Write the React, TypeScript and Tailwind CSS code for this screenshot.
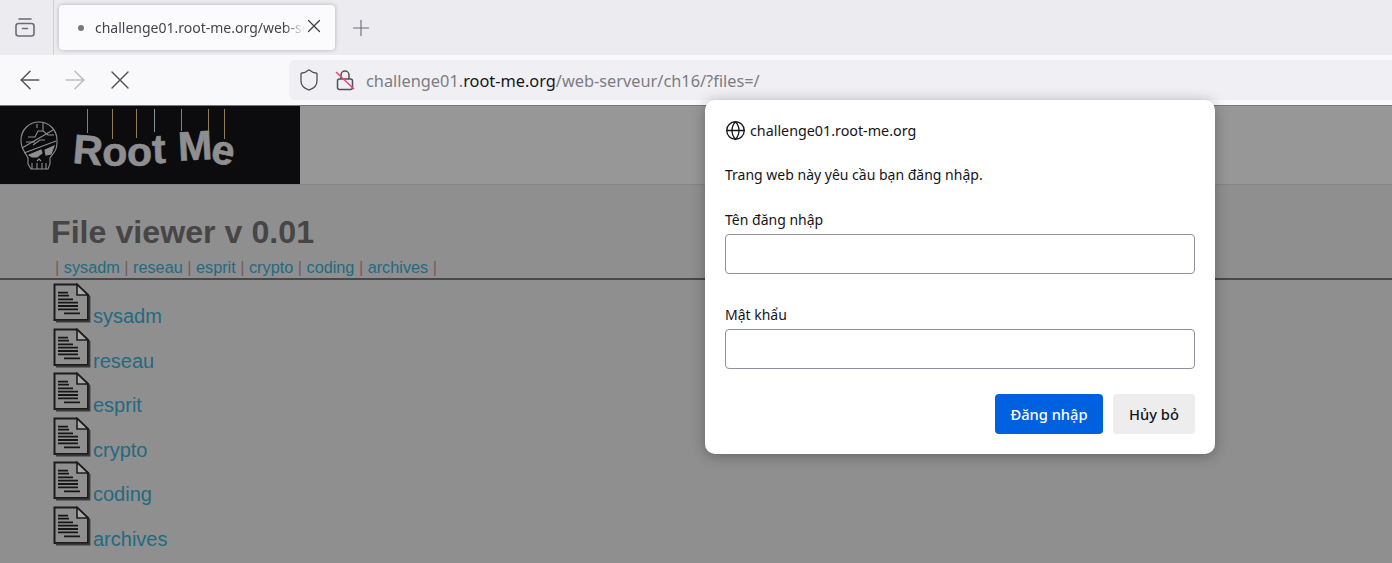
import React from 'react';
import { ArrowLeft, ArrowRight, X, Plus, Shield, Globe } from 'lucide-react';

const ui = "font-['Noto_Sans',sans-serif]";
const files = ['sysadm', 'reseau', 'esprit', 'crypto', 'coding', 'archives'];

const FileIcon = () => (
  <svg width="38" height="40" viewBox="0 0 38 40" className="shrink-0 block">
    <path d="M1.500 1.500H24L35 12V37H1.500Z" fill="#8f8f90" stroke="#1c1c1d" strokeWidth="2" />
    <path d="M24 1.500V12H35Z" fill="#a9a9aa" stroke="#1c1c1d" strokeWidth="1.600" />
    <path d="M3 38.500H36.500V13" fill="none" stroke="#3a3a3b" strokeWidth="1.800" />
    <path
      d="M5 9.700h10M5 12.700h11M5 16.300h15M5 19.700h20M5 23h20M5 26.300h20M11 30.300h16"
      stroke="#161617"
      strokeWidth="1.800"
    />
  </svg>
);

const Skull = () => (
  <svg width="38" height="49" viewBox="0 0 38 49" fill="none" stroke="#8f8f91" strokeWidth="1.100" className="shrink-0">
    <path d="M19 1C9 1 1 9 1 19c0 5 1 8 3 11l4 7v6l3 5h17l2-5v-6l5-7c2-3 2-6 2-11C37 9 29 1 19 1Z" />
    <path d="M2 27L33 9M4 32L36 20" />
    <path d="M8 16h7l3-6h5M6 21h9M13 24l7-5h5M23 2v8l5 4h6M17 3v4" />
    <path d="M9 34l12-5 1 3-5 4h-5ZM25 29l9-4-3 8-5 1Z" fill="#8f8f91" />
    <path d="M12 42v6M17 42v6M22 42v6M26 42v6M17 40l2-2 2 2" />
  </svg>
);

const strings = [
  { x: 87, h: 24, c: '#5c8ba3' },
  { x: 112, h: 30, c: '#8f7d55' },
  { x: 136, h: 29, c: '#8f7d55' },
  { x: 154, h: 23, c: '#84929a' },
  { x: 181, h: 22, c: '#5c8ba3' },
  { x: 208, h: 24, c: '#8f7d55' },
  { x: 224, h: 30, c: '#8f7d55' },
];

const Logo = () => (
  <div className="relative w-[300px] h-[78px] bg-[#0c0c0f] flex items-center pl-[20px] overflow-hidden">
    {strings.map((s) => (
      <span
        key={s.x}
        className="absolute top-[3px] w-px"
        style={{ left: s.x, height: s.h, backgroundColor: s.c }}
      />
    ))}
    <Skull />
    <div className="ml-[15px] mt-[8px] flex font-['Liberation_Sans',sans-serif] font-bold text-[41px] tracking-[-0.4px] leading-none text-[#8f8f91] [-webkit-text-stroke:0.7px_#8f8f91]">
      <span className="inline-block rotate-[5deg] translate-y-[1px]">R</span>
      <span className="inline-block translate-y-[3px]">o</span>
      <span className="inline-block translate-y-[3px]">o</span>
      <span className="inline-block -rotate-2">t</span>
      <span className="w-[13px]" />
      <span className="inline-block -rotate-3 translate-y-[-3px]">M</span>
      <span className="inline-block rotate-[12deg] translate-y-[1px]">e</span>
    </div>
  </div>
);

const Chrome = () => (
  <div className={ui}>
    <div className="h-[55px] bg-[#ebebf0] flex items-center">
      <div className="w-[54px] h-full border-r border-[#cfcfd4] flex items-center pl-[15px]">
        <svg width="20" height="19" viewBox="0 0 20 19" fill="none" stroke="#6b6b72" strokeWidth="1.600" strokeLinecap="round">
          <rect x="1" y="5.500" width="18" height="12.500" rx="2.500" />
          <path d="M4 1h12M7.500 10.500h5" />
        </svg>
      </div>
      <div className="ml-[5px] w-[276px] h-[45px] bg-[#fbfbfd] rounded-[4px] shadow-[0_0_4px_rgba(0,0,0,0.25)] flex items-center pl-[19px] relative">
        <span className="w-[6px] h-[6px] rounded-full bg-[#77777d]" />
        <span className="ml-[11px] w-[210px] overflow-hidden whitespace-nowrap text-[14px] text-[#45454b] [mask-image:linear-gradient(to_right,black_90%,transparent)]">
          challenge01.root-me.org/web-serveur/ch16/
        </span>
        <X size={22} strokeWidth={1.300} className="absolute right-[10px] top-[10px] text-[#3f3f45]" />
      </div>
      <Plus size={26} strokeWidth={1.050} className="ml-[13px] text-[#6e6e74]" />
    </div>
    <div className="h-[50px] bg-[#f9f9fb] flex items-center">
      <ArrowLeft size={30} strokeWidth={1.250} className="ml-[15px] text-[#55555b]" />
      <ArrowRight size={30} strokeWidth={1.250} className="ml-[15px] text-[#bdbdc1]" />
      <X size={32} strokeWidth={1.100} className="ml-[14px] text-[#55555b]" />
      <div className="ml-[153px] flex-1 h-[40px] bg-[#f0f0f4] rounded-l-[6px] flex items-center pl-[8px]">
        <Shield size={24} strokeWidth={1.300} className="text-[#505056]" />
        <svg width="20" height="22" viewBox="0 0 20 22" fill="none" className="ml-[14px]">
          <rect x="2.500" y="10" width="15" height="10.500" rx="2" stroke="#505056" strokeWidth="1.500" />
          <path d="M6 10V6a4 4 0 0 1 8 0v4" stroke="#505056" strokeWidth="1.500" />
          <path d="M1 3L19 20" stroke="#ef476f" strokeWidth="1.500" />
        </svg>
        <span className="ml-[11px] mt-[3px] text-[16.330px] text-[#7c7c82] whitespace-nowrap">
          challenge01.<span className="text-[#15141a]">root-me.org</span>/web-serveur/ch16/?files=/
        </span>
      </div>
    </div>
  </div>
);

const LoginDialog = () => (
  <div className={`absolute left-[705px] top-[100px] w-[510px] h-[354px] bg-white rounded-[10px] shadow-[0_2px_14px_rgba(0,0,0,0.3)] px-[20px] pt-[20px] ${ui} text-[14px] text-[#15141a]`}>
    <div className="flex items-center h-[21px] gap-[4px] text-[14.300px]">
      <Globe size={21} strokeWidth={1.500} className="text-[#15141a]" />
      <span>challenge01.root-me.org</span>
    </div>
    <p className="mt-[24px] leading-[20px]">Trang web này yêu cầu bạn đăng nhập.</p>
    <label className="block mt-[25px] leading-[20px]">Tên đăng nhập</label>
    <div className="mt-[4px] h-[40px] border border-[#8f8f9d] rounded-[4px]" />
    <label className="block mt-[31px] leading-[20px]">Mật khẩu</label>
    <div className="mt-[4px] h-[40px] border border-[#8f8f9d] rounded-[4px]" />
    <div className="mt-[25px] flex justify-end gap-[10px] text-[14.700px]">
      <button className="w-[108px] h-[40px] bg-[#0061e0] text-white rounded-[4px] font-medium">Đăng nhập</button>
      <button className="w-[82px] h-[40px] bg-[#ededed] rounded-[4px] font-medium">Hủy bỏ</button>
    </div>
  </div>
);

export default function App() {
  return (
    <div className="relative w-[1392px] h-[563px] overflow-hidden bg-[#8f8f90] font-['Liberation_Sans',sans-serif]">
      <Chrome />
      <div className="h-[1px] bg-[#77777a]" />
      <div className="h-[78px] bg-[#979798]">
        <Logo />
      </div>
      <div className="h-[1px] bg-[#848485]" />
      <h1 className="mt-[28px] ml-[51px] text-[32.200px] leading-[38px] font-bold text-[#474546]">File viewer v 0.01</h1>
      <div className="mt-[7px] pl-[55px] text-[16.250px] leading-[19px] text-[#6f5e5c] border-b-2 border-[#49494a] pb-[1px] whitespace-nowrap">
        |{files.map((f) => (
          <span key={f}>
            {' '}
            <a className="text-[#236a80]">{f}</a> |
          </span>
        ))}
      </div>
      <div className="ml-[53px] mt-[3px] flex flex-col">
        {files.map((f) => (
          <div key={f} className="h-[44.500px] flex items-start">
            <FileIcon />
            <a className="ml-[2px] mt-[22px] text-[20px] leading-[23px] text-[#236a80]">{f}</a>
          </div>
        ))}
      </div>
      <LoginDialog />
    </div>
  );
}
